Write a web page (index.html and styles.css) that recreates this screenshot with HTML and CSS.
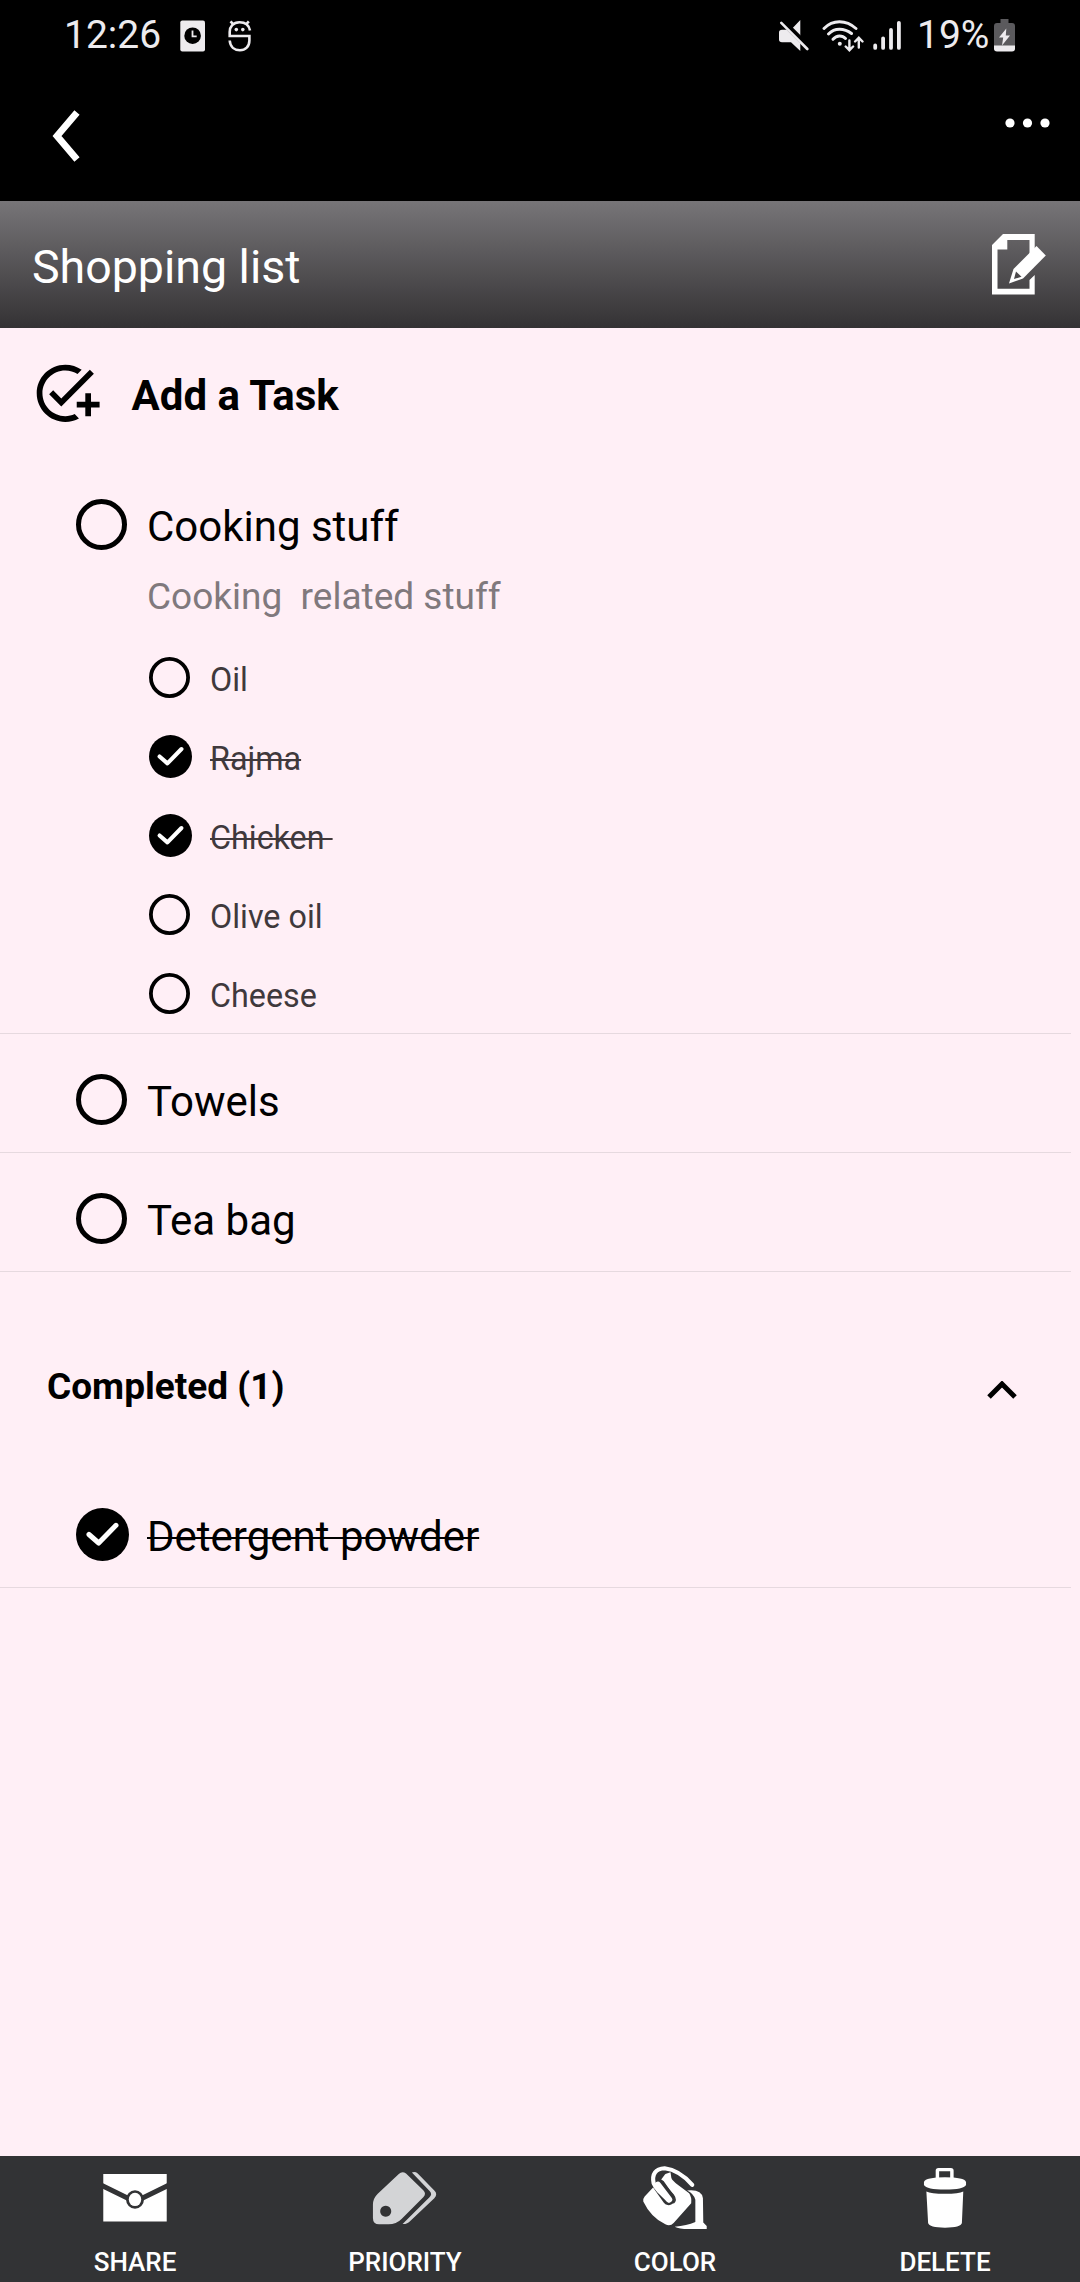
FILE: index.html
```
<!DOCTYPE html>
<html lang="en">
<head>
  <meta charset="utf-8">
  <title>Shopping list</title>
  <meta name="viewport" content="width=device-width, initial-scale=1">
  <link rel="stylesheet" href="styles.css">
</head>
<body>
  <svg class="defs" width="0" height="0">
    <symbol id="ring" viewBox="0 0 51 51"><circle cx="25.5" cy="25.5" r="23" fill="none" stroke="#000" stroke-width="5"/></symbol>
    <symbol id="ring-small" viewBox="0 0 41 41"><circle cx="20.5" cy="20.5" r="18.6" fill="none" stroke="#000" stroke-width="3.8"/></symbol>
    <symbol id="checked" viewBox="0 0 53 53">
      <circle cx="26.5" cy="26.5" r="26.5"/>
      <path d="M13 26.5l9.7 8.5L40 17.3" fill="none" stroke="#fff" stroke-width="5" stroke-linecap="round" stroke-linejoin="round"/>
    </symbol>
  </svg>

  <div class="status-bar">
    <span class="clock">12:26</span>
    <svg class="alarm-icon" width="26" height="32" viewBox="0 0 26 32">
      <rect x="0.3" y="0.5" width="24.7" height="31" rx="2" fill="#edebee"/>
      <circle cx="12.6" cy="15.7" r="8.3" fill="#000"/>
      <path d="M12.5 10.5v5.8h4.2" fill="none" stroke="#edebee" stroke-width="1.8"/>
    </svg>
    <svg class="bot-icon" width="24" height="32" viewBox="0 0 24 32" fill="none" stroke="#edebee" stroke-width="2.6">
      <path d="M22 10.5C21 5 17 2.2 11.5 2.2C5 2.2 1.7 7 1.7 12v4h19.7v4.5c0 6-4 9.7-9.5 9.7S2.2 27 1.7 20.5M5.5 4.5L2.5 1.3M18 4.5l2.8-3.2"/>
      <circle cx="8.3" cy="9.6" r="1.8" fill="#edebee" stroke="none"/>
      <circle cx="14.8" cy="9.6" r="1.8" fill="#edebee" stroke="none"/>
    </svg>
    <svg class="mute-icon" width="30" height="32" viewBox="0 0 30 32">
      <path d="M21.3 0v31L12 22.3H3Q0 22.3 0 19.5V12.5Q0 9.7 3 9.7h9z" fill="#edebee"/>
      <path d="M2 0L29 27" stroke="#000" stroke-width="6"/>
      <path d="M2.3 2.8L28.3 29" stroke="#edebee" stroke-width="2.6" stroke-linecap="round"/>
    </svg>
    <svg class="wifi-icon" width="42" height="32" viewBox="0 0 42 32" fill="none" stroke="#edebee" stroke-width="2.9" stroke-linecap="round">
      <path d="M2 8.5Q8.5 1.7 17.5 1.7T34 8.5M6.5 14Q11 9.2 17.5 9.2T29.5 13.5M11 19.3Q13.8 16 17.5 16T23.5 18.5"/>
      <circle cx="17.8" cy="23.8" r="2" fill="#edebee" stroke="none"/>
      <path stroke-width="2.4" d="M27.4 20.5v9.5M23.7 26.5l3.7 3.7l3.7-3.7M36.8 27.5V18M33.1 21.5l3.7-3.7l3.7 3.7"/>
    </svg>
    <svg class="signal-icon" width="30" height="32" viewBox="0 0 30 32" stroke="#edebee" stroke-width="3.8" stroke-linecap="round">
      <path d="M2.2 25.5v2.4M10.1 18.3v9.6M18 10v17.9M25.9 2.8v25.1"/>
    </svg>
    <span class="battery-level">19%</span>
    <svg class="battery-icon" width="22" height="33" viewBox="0 0 22 33">
      <path d="M6.5 0h8v4H18q3 0 3 3v22q0 3-3 3H3q-3 0-3-3V7q0-3 3-3h3.5z" fill="#5b5a5d"/>
      <path d="M0 26.5h21v3q0 3-3 3H3q-3 0-3-3z" fill="#edebee"/>
      <path d="M12.3 9.5L5 18.5h4.2L8 26.5L16 16.5h-4.2z" fill="#edebee"/>
    </svg>
  </div>

  <div class="toolbar">
    <svg width="28" height="52" viewBox="0 0 28 52"><path d="M25 2.5L5 26L25 49.5" fill="none" stroke="#fff" stroke-width="6.8"/></svg>
    <svg class="more-icon" width="46" height="10" viewBox="0 0 46 10" fill="#fff">
      <circle cx="5" cy="5" r="4.6"/><circle cx="22.5" cy="5" r="4.6"/><circle cx="40" cy="5" r="4.6"/>
    </svg>
  </div>

  <div class="list-header">
    <h1>Shopping list</h1>
    <svg width="54" height="61" viewBox="0 0 54 61">
      <path d="M11 0H42.7V19L37.5 24V6H15.3V15.5H5.5V54.7H37.5V46L42.7 41V60.5H0V11z" fill="#fff"/>
      <path d="M44.5 12L53.8 21.5L31 44.5L17 49.5L21.5 35z" fill="#fff"/>
      <path d="M24 37.5l5.5 5.3l-7.5 2.2z" fill="#4b494b"/>
    </svg>
  </div>

  <div class="add-task">
    <svg width="68.6" height="68.6" viewBox="0 0 24 24">
      <path d="M22 5.18L10.59 16.6l-4.24-4.24 1.41-1.41 2.83 2.83 10-10L22 5.18zM12 20c-4.42 0-8-3.58-8-8s3.58-8 8-8c1.57 0 3.04.46 4.28 1.25l1.45-1.45C16.1 2.67 14.13 2 12 2 6.48 2 2 6.48 2 12s4.48 10 10 10c1.73 0 3.36-.44 4.78-1.22l-1.5-1.5c-1 .46-2.11.72-3.28.72zM19 15h-3v2h3v3h2v-3h3v-2h-3v-3h-2v3z"/>
    </svg>
    <span>Add a Task</span>
  </div>

  <div class="task">
    <div class="task-row"><svg width="51" height="51"><use href="#ring"/></svg><span>Cooking stuff</span></div>
    <p class="note">Cooking&nbsp; related stuff</p>
    <div class="subtask"><svg width="41" height="41"><use href="#ring-small"/></svg><span>Oil</span></div>
    <div class="subtask done"><svg width="43" height="43"><use href="#checked"/></svg><span>Rajma</span></div>
    <div class="subtask done"><svg width="43" height="43"><use href="#checked"/></svg><span>Chicken&nbsp;</span></div>
    <div class="subtask"><svg width="41" height="41"><use href="#ring-small"/></svg><span>Olive oil</span></div>
    <div class="subtask"><svg width="41" height="41"><use href="#ring-small"/></svg><span>Cheese</span></div>
  </div>
  <div class="task single">
    <div class="task-row"><svg width="51" height="51"><use href="#ring"/></svg><span>Towels</span></div>
  </div>
  <div class="task single">
    <div class="task-row"><svg width="51" height="51"><use href="#ring"/></svg><span>Tea bag</span></div>
  </div>

  <div class="completed-header">
    <h2>Completed (1)</h2>
    <svg width="30" height="18" viewBox="0 0 30 18"><path d="M2 16L15 3L28 16" fill="none" stroke="#000" stroke-width="5"/></svg>
  </div>
  <div class="task single">
    <div class="task-row done"><svg width="53" height="53"><use href="#checked"/></svg><span>Detergent powder</span></div>
  </div>

  <div class="bottom-bar">
    <div class="action">
      <svg viewBox="0 0 232 232" preserveAspectRatio="none">
        <path d="M24 54H208V197H24z" fill="#fff"/>
        <path d="M20 89L116 138L212 89" fill="none" stroke="#323335" stroke-width="15"/>
        <ellipse cx="116" cy="131" rx="26" ry="28" fill="#323335"/>
        <ellipse cx="116" cy="131" rx="18" ry="20" fill="#fff"/>
      </svg>
      <span>SHARE</span>
    </div>
    <div class="action">
      <svg viewBox="0 0 232 232" preserveAspectRatio="none" fill="#d3d4d6">
        <path fill-rule="evenodd" d="M98 54Q108 45 119 53L169 103Q179 114 169 124L106 190Q91 206 68 206H41Q23 206 23 187V147Q23 128 37 114zM60 150a16 16.5 0 1 0 .1 0z"/>
        <path d="M136 50Q145 46 153 53L201 104Q212 115 201 127L132 195Q122 206 109 205L187 124Q196 115 188 106z"/>
      </svg>
      <span>PRIORITY</span>
    </div>
    <div class="action">
      <svg viewBox="0 0 232 232" preserveAspectRatio="none" fill="#fff">
        <path d="M96 52Q106 74 126 88L157 112Q165 124 163 142L112 202Q102 213 88 206Q46 185 24 137Q23 128 28 122L47 101L72 74z"/>
        <path d="M166 92Q138 58 104 48Q108 74 140 95L152 104z" fill="#323335"/>
        <!-- bucket handle: dark outline under the white stroke -->
        <path d="M84 50Q60 58 67 84L98 130" fill="none" stroke="#323335" stroke-width="36" stroke-linecap="round"/>
        <path d="M100 53Q78 66 76 76L111 117Q122 133 111 142" fill="none" stroke="#323335" stroke-width="4"/>
        <path d="M166 87Q128 42 86 37Q46 40 54 82Q58 92 68 104L97 134" fill="none" stroke="#fff" stroke-width="12" stroke-linecap="round" stroke-linejoin="round"/>
        <path d="M66 86L99 131" fill="none" stroke="#fff" stroke-width="18" stroke-linecap="round"/>
        <path d="M88 54L103 49L106 70L84 76L76 71z"/>
        <path d="M151 104Q193 99 197 127L198 200L208 211V220H155Q128 220 115 213Q150 210 175 199V132Q171 114 151 104z"/>
      </svg>
      <span>COLOR</span>
    </div>
    <div class="action">
      <svg viewBox="0 0 232 232" preserveAspectRatio="none" fill="#fff">
        <rect x="94" y="41" width="42" height="34" rx="3" fill="none" stroke="#fff" stroke-width="10"/>
        <path d="M55 78Q60 64 116 64T177 78V87Q170 101 116 101T55 87z"/>
        <path d="M62 107Q75 114 116 114T169 107L165 202Q162 216 116 216T67 202z"/>
      </svg>
      <span>DELETE</span>
    </div>
  </div>
</body>
</html>
```
FILE: styles.css
```
* {
  box-sizing: border-box;
}
body {
  margin: 0;
  min-height: 2282px;
  display: flex;
  flex-direction: column;
  font-family: Roboto, sans-serif;
  color: #000;
  background-color: #ffeff6;
}
h1, h2, p {
  margin: 0;
}
svg {
  display: block;
  flex: none;
}
.defs {
  position: absolute;
}
.status-bar {
  display: flex;
  align-items: center;
  height: 71px;
  padding: 0 64px 0 64px;
  background-color: #000;
  color: #edebee;
  font-size: 39px;
}
.clock {
  width: 116px;
  padding-bottom: 2px;
}
.bot-icon {
  margin-left: 22px;
}
.mute-icon {
  margin-left: auto;
}
.wifi-icon {
  margin-left: 13px;
}
.signal-icon {
  margin-left: 9px;
}
.battery-level {
  width: 77px;
  margin-left: 14px;
  padding-bottom: 2px;
}
.toolbar {
  display: flex;
  align-items: center;
  justify-content: space-between;
  height: 130px;
  padding: 0 29px 0 52px;
  background-color: #000;
}
.more-icon {
  margin-bottom: 26px;
}
.list-header {
  display: flex;
  align-items: center;
  justify-content: space-between;
  height: 127px;
  padding: 0 34px 0 32px;
  background: linear-gradient(#777578, #343234);
  color: #fff;
}
.list-header h1 {
  padding-top: 5px;
  font-size: 46.5px;
  font-weight: 400;
}
.add-task {
  display: flex;
  align-items: center;
  height: 131px;
  padding-left: 31px;
  font-size: 42px;
  font-weight: 700;
}
.add-task span {
  margin-left: 32px;
  padding-top: 4px;
}
.task {
  width: 1071px;
  padding-top: 18px;
  border-bottom: 1px solid #e6d9df;
}
.task.single {
  height: 119px;
}
.task-row {
  display: flex;
  align-items: center;
  height: 95px;
  padding-left: 76px;
  font-size: 42px;
}
.task-row span {
  padding-top: 4px;
  margin-left: 20px;
}
.task-row.done span {
  margin-left: 18px;
}
.note {
  height: 48px;
  margin: 0 0 18px 147px;
  line-height: 50px;
  font-size: 37px;
  color: #80797d;
}
.subtask {
  display: flex;
  align-items: center;
  height: 79px;
  padding-left: 149px;
  font-size: 32.3px;
  color: #3f393c;
}
.subtask span {
  padding-top: 4px;
  margin-left: 20px;
}
.subtask.done span {
  margin-left: 18px;
}
.done span {
  text-decoration: line-through;
  text-decoration-thickness: 2px;
}
.completed-header {
  display: flex;
  align-items: center;
  justify-content: space-between;
  height: 197px;
  padding: 32px 63px 0 47px;
}
.completed-header h2 {
  font-size: 37px;
  font-weight: 700;
}
.completed-header svg {
  margin-top: 6px;
}
.bottom-bar {
  display: flex;
  height: 126px;
  margin-top: auto;
  background-color: #323335;
}
.action {
  flex: 1;
  display: flex;
  flex-direction: column;
  align-items: center;
  color: #fff;
  font-size: 26px;
  font-weight: 500;
}
.action svg {
  width: 80px;
  height: 77px;
}
.action span {
  margin-top: 13px;
  line-height: 32px;
}
```
